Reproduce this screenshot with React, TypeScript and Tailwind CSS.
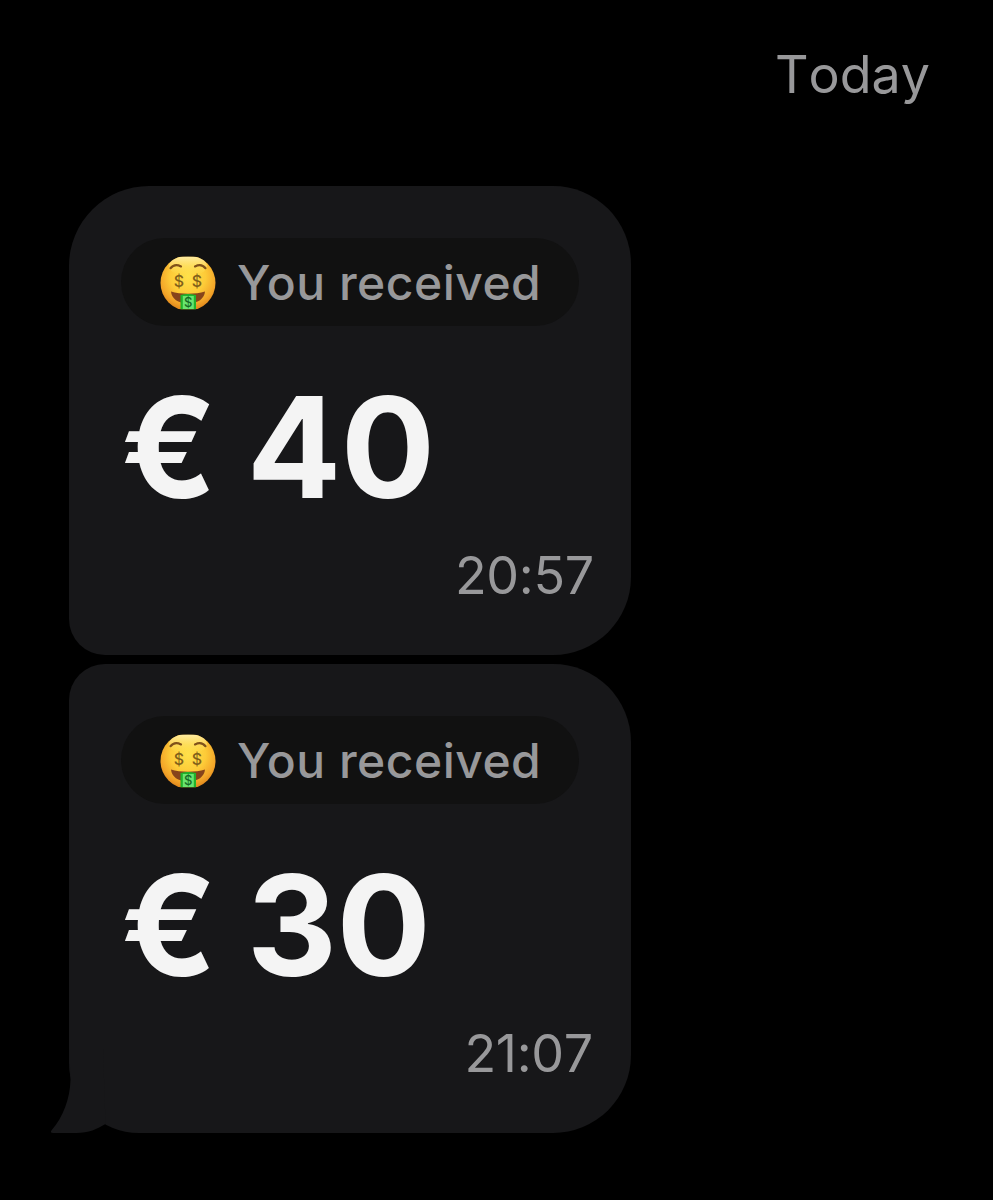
import clsx from "clsx";

const messages = [
  { id: 1, amount: "€ 40", time: "20:57" },
  { id: 2, amount: "€ 30", time: "21:07" },
];

function MoneyFace() {
  return (
    <svg
      viewBox="0 0 56 56"
      className="h-14 w-14 shrink-0"
      fontFamily="Inter, sans-serif"
      textAnchor="middle"
    >
      <defs>
        <radialGradient id="face" cx="0.5" cy="0.38" r="0.64">
          <stop offset="0" stopColor="#ffe14a" />
          <stop offset="0.5" stopColor="#fdcb38" />
          <stop offset="0.8" stopColor="#f3a529" />
          <stop offset="1" stopColor="#dc8019" />
        </radialGradient>
        <linearGradient id="shine" x1="0" y1="0" x2="0" y2="1">
          <stop offset="0" stopColor="#fff3b8" stopOpacity="0.9" />
          <stop offset="1" stopColor="#ffe650" stopOpacity="0" />
        </linearGradient>
        <clipPath id="head">
          <path d="M0 1.8H56V54.2H0Z" />
        </clipPath>
      </defs>
      <g clipPath="url(#head)">
        <circle cx="28" cy="28" r="27.5" fill="url(#face)" />
        <ellipse cx="28" cy="11" rx="19" ry="10" fill="url(#shine)" />
      </g>
      <path
        d="M10.5 13.2C13 10 17 9.4 21 11.4M35 11.4C39 9.4 43 10 45.5 13.2"
        fill="none"
        stroke="#80521a"
        strokeWidth="2.2"
        strokeLinecap="round"
      />
      <text x="19" y="31.8" fontSize="16" fontWeight="500" fill="#80601a">
        $
      </text>
      <text x="37" y="31.8" fontSize="16" fontWeight="500" fill="#80601a">
        $
      </text>
      <path
        d="M11 36.5C20 39.5 36 39.5 45 36.5C44.5 43.5 38 48.5 28 48.5C18 48.5 11.5 43.5 11 36.5Z"
        fill="#87441b"
      />
      <path d="M20.5 40C25.5 38.8 30.5 38.8 36 40V54.2H20.5Z" fill="#20b32c" />
      <path d="M22.8 41H33.8V54H22.8Z" fill="#6ae570" />
      <text x="28.3" y="52" fontSize="13" fontWeight="500" fill="#176b25">
        $
      </text>
    </svg>
  );
}

function Tail() {
  return (
    <svg
      viewBox="0 0 56 84"
      className="absolute bottom-0 -left-[18px] h-[84px] w-14"
    >
      <path
        d="M18 0C18 14 19.8 18 19.5 31C19 50 12 68 0.8 81C-0.8 83 -0.3 84 2 84H25C38 84 46 80 54.5 75L52 0Z"
        fill="#171719"
      />
    </svg>
  );
}

function Bubble({
  amount,
  time,
  last,
}: {
  amount: string;
  time: string;
  last: boolean;
}) {
  return (
    <div
      className={clsx(
        "relative flex h-[469px] w-[562px] flex-col rounded-r-[78px] bg-[#171719] pt-[52px] pl-[52px]",
        last
          ? "rounded-tl-[36px] rounded-bl-[70px] pr-[38px]"
          : "rounded-tl-[80px] rounded-bl-[36px] pr-[37px]"
      )}
    >
      {last && <Tail />}
      <div className="flex h-[88px] w-[458px] items-center rounded-full bg-[#111111] pt-0.5 pl-[39px]">
        <MoneyFace />
        <span className="ml-[21px] text-[48px] leading-[86px] font-medium tracking-[0.5px] whitespace-nowrap text-[#98989a]">
          You received
        </span>
      </div>
      <div className="mt-[51px] text-[140px] leading-[140px] font-bold tracking-[-0.6px] whitespace-pre text-[#f4f4f4] [word-spacing:-2px]">
        {amount}
      </div>
      <div className="mt-[27px] self-end text-[52px] leading-[64px] tracking-[-0.3px] text-[#98989a] [font-kerning:none]">
        {time}
      </div>
    </div>
  );
}

export default function App() {
  return (
    <div className="flex h-[1200px] w-[993px] flex-col overflow-hidden bg-black font-['Inter',sans-serif]">
      <div className="flex h-[186px] justify-end pt-[43px] pr-[63px] text-[52px] leading-[64px] text-[#98989a] [font-kerning:none]">
        Today
      </div>
      <div className="flex flex-col gap-[9px] pl-[69px]">
        {messages.map((message, index) => (
          <Bubble
            key={message.id}
            amount={message.amount}
            time={message.time}
            last={index === messages.length - 1}
          />
        ))}
      </div>
    </div>
  );
}
